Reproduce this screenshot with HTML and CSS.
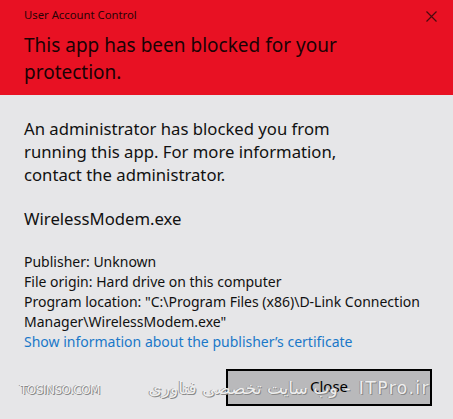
FILE: index.html
```html
<!DOCTYPE html>
<html>
<head>
<meta charset="utf-8">
<link rel="stylesheet" href="styles.css">
</head>
<body>
<div class="dialog">
  <header class="banner">
    <div class="titlebar">
      <span class="title">User Account Control</span>
      <svg class="close-x" width="11" height="11" viewBox="0 0 11 11"><path d="M0.5 0.5 L10.5 10.5 M10.5 0.5 L0.5 10.5" stroke="#4a0a0e" stroke-width="1.2" fill="none"/></svg>
    </div>
    <h1 class="heading">This app has been blocked for your protection.</h1>
  </header>
  <main class="content">
    <p class="message">An administrator has blocked you from running this app. For more information, contact the administrator.</p>
    <p class="appname">WirelessModem.exe</p>
    <div class="details">
      <div>Publisher: Unknown</div>
      <div>File origin: Hard drive on this computer</div>
      <div>Program location: "C:\Program Files (x86)\D-Link Connection Manager\WirelessModem.exe"</div>
      <a class="link">Show information about the publisher’s certificate</a>
    </div>
    <div class="actions">
      <button class="btn">Close</button>
    </div>
  </main>
  <div class="watermark"><span class="wm-left">TOSINSO.COM</span><span class="wm-right" dir="rtl">ITPro.ir - وب سایت تخصصی فناوری</span></div>
</div>
</body>
</html>
```
FILE: styles.css
```css
html, body {
  margin: 0;
  padding: 0;
  background: #e6e6e8;
}
body {
  font-family: "Noto Sans", "Open Sans", sans-serif;
  color: #111;
}
.dialog {
  width: 453px;
  height: 419px;
  position: relative;
  overflow: hidden;
  background: #e6e6e8;
}
.banner {
  background: #e81123;
  height: 95px;
  box-sizing: border-box;
  padding: 5px 0 0 24px;
}
.titlebar {
  display: flex;
  justify-content: space-between;
  align-items: center;
  padding-right: 16px;
  height: 18px;
}
.title {
  font-size: 11.3px;
  color: #2a0306;
}
.close-x {
  display: block;
  margin-top: 4px;
}
.heading {
  margin: 9px 0 0;
  font-weight: normal;
  font-size: 19px;
  line-height: 27px;
  color: #1a0204;
  width: 330px;
}
.content {
  padding: 22px 21px 0 24px;
}
.message {
  margin: 0;
  font-size: 16.7px;
  line-height: 23px;
  width: 340px;
}
.appname {
  margin: 21px 0 0;
  font-size: 16.7px;
  line-height: 23px;
}
.details {
  margin-top: 22px;
  font-size: 14px;
  line-height: 20px;
}
.link {
  color: #1a78c8;
  display: block;
}
.actions {
  display: flex;
  justify-content: flex-end;
  margin-top: 17px;
}
.btn {
  width: 206px;
  height: 37px;
  border: 2px solid #000;
  background: #b9b9bb;
  font-family: "Noto Sans", "Open Sans", sans-serif;
  font-size: 15px;
  line-height: 20px;
  color: #000;
  padding: 0 0 3px;
}
.watermark {
  position: absolute;
  left: 20px;
  right: 23px;
  top: 378px;
  display: flex;
  justify-content: space-between;
  align-items: baseline;
  pointer-events: none;
}
.wm-left, .wm-right {
  color: rgba(255,255,255,0.85);
  text-shadow: 1px 1px 0 #8a8a8a, -1px 0 0 #9a9a9a;
}
.wm-left {
  font-family: "DejaVu Sans", sans-serif;
  font-size: 12px;
  letter-spacing: -0.5px;
}
.wm-right {
  font-family: "DejaVu Sans", sans-serif;
  font-size: 17px;
  letter-spacing: 1.5px;
}
```
